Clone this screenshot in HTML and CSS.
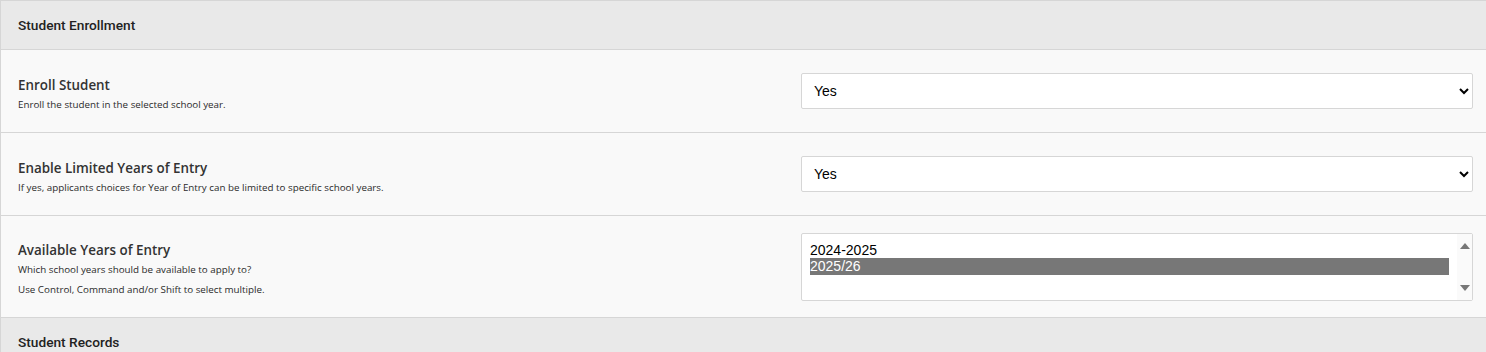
FILE: index.html
```html
<!DOCTYPE html>
<html lang="en">
<head>
    <meta charset="UTF-8">
    <meta name="viewport" content="width=device-width, initial-scale=1.0">
    <title>Student Settings</title>
    <link rel="stylesheet" href="styles.css">
</head>
<body>
    <div class="settings-table">
        <div class="section-heading">Student Enrollment</div>

        <div class="setting-row">
            <div class="setting-label">
                <div class="setting-title">Enroll Student</div>
                <div class="setting-desc">Enroll the student in the selected school year.</div>
            </div>
            <div class="setting-field">
                <select class="field-select">
                    <option selected>Yes</option>
                    <option>No</option>
                </select>
            </div>
        </div>

        <div class="setting-row">
            <div class="setting-label">
                <div class="setting-title">Enable Limited Years of Entry</div>
                <div class="setting-desc">If yes, applicants choices for Year of Entry can be limited to specific school years.</div>
            </div>
            <div class="setting-field">
                <select class="field-select">
                    <option selected>Yes</option>
                    <option>No</option>
                </select>
            </div>
        </div>

        <div class="setting-row tall">
            <div class="setting-label">
                <div class="setting-title">Available Years of Entry</div>
                <div class="setting-desc">Which school years should be available to apply to?</div>
                <div class="setting-desc">Use Control, Command and/or Shift to select multiple.</div>
            </div>
            <div class="setting-field">
                <div class="field-multi" role="listbox" aria-multiselectable="true">
                    <div class="multi-options">
                        <div class="multi-option" role="option">2024-2025</div>
                        <div class="multi-option selected" role="option" aria-selected="true">2025/26</div>
                    </div>
                    <div class="multi-scrollbar">
                        <span class="arrow-up"></span>
                        <span class="arrow-down"></span>
                    </div>
                </div>
            </div>
        </div>

        <div class="section-heading">Student Records</div>
    </div>
</body>
</html>
```

FILE: styles.css
```css
body {
    margin: 0;
    padding: 0;
    background-color: #ffffff;
    font-family: "Open Sans", "Noto Sans", sans-serif;
    color: #222;
}

.settings-table {
    width: 1500px;
    border-top: 1px solid #d6d6d6;
    border-left: 1px solid #d6d6d6;
}

.section-heading {
    height: 48px;
    padding-left: 17px;
    display: flex;
    align-items: center;
    background-color: #e9e9e9;
    border-bottom: 1px solid #d6d6d6;
    font-family: Roboto, Arial, sans-serif;
    font-weight: 500;
    font-size: 13.7px;
    color: #222;
}

.setting-row {
    display: flex;
    align-items: center;
    height: 82px;
    padding: 0 27px 0 17px;
    background-color: #f9f9f9;
    border-bottom: 1px solid #d6d6d6;
}

.setting-row.tall {
    height: 101px;
}

.setting-label {
    width: 783px;
    padding-top: 7px;
}

.setting-title {
    font-size: 13.4px;
    font-weight: 600;
    color: #333;
    line-height: 20px;
}

.setting-desc {
    font-size: 9.8px;
    line-height: 20px;
    color: #2a2a2a;
}

.setting-field {
    flex: 1;
}

.field-select {
    width: 672px;
    height: 36px;
    padding: 0 8px;
    border: 1px solid #d6d6d6;
    border-radius: 2px;
    background-color: #fff;
    font-family: Arial, "Liberation Sans", sans-serif;
    font-size: 14px;
    color: #000;
}

.field-multi {
    display: flex;
    width: 670px;
    height: 66px;
    border: 1px solid #d6d6d6;
    border-radius: 2px;
    background-color: #fff;
    font-family: Arial, "Liberation Sans", sans-serif;
    font-size: 14px;
    color: #000;
}

.multi-options {
    flex: 1;
    padding: 8px 8px 0 8px;
}

.multi-option {
    line-height: 16px;
    height: 16px;
}

.multi-option.selected {
    height: 17px;
    line-height: 17px;
    background-color: #777;
    color: #fff;
}

.multi-scrollbar {
    width: 15px;
    display: flex;
    flex-direction: column;
    justify-content: space-between;
    align-items: center;
    padding: 9px 0 9px;
    background-color: #fafafa;
}

.arrow-up,
.arrow-down {
    width: 0;
    height: 0;
    border-left: 5px solid transparent;
    border-right: 5px solid transparent;
}

.arrow-up {
    border-bottom: 6px solid #777;
}

.arrow-down {
    border-top: 6px solid #777;
}
```
